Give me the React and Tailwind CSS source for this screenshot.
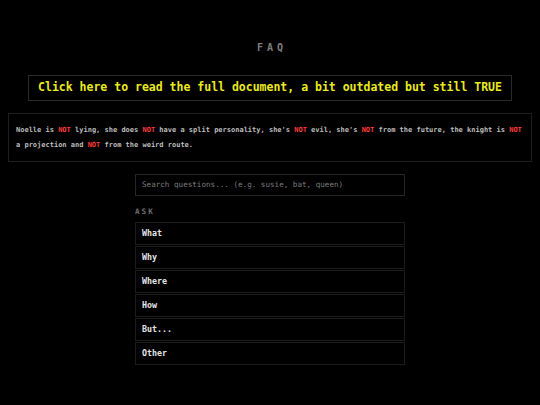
import React from "react";

const mono = { fontFamily: '"DejaVu Sans Mono", "Liberation Mono", monospace' };

function Not() {
  return <span className="text-[#ff3b3b]">NOT</span>;
}

export default function App() {
  const items = ["What", "Why", "Where", "How", "But...", "Other"];
  return (
    <div className="w-[540px] h-[405px] bg-black overflow-hidden" style={mono}>
      <div className="flex flex-col items-center pt-[41px]">
        <div className="text-[10px] font-bold tracking-[4px] text-[#7e7e7e] leading-[14px] pl-[4px]">FAQ</div>
        <div className="mt-[20px] w-[484px] h-[26px] border border-[#2a2a2a] flex items-center justify-center">
          <span className="text-[11.5px] font-bold text-[#eaea1e] leading-none">
            Click here to read the full document, a bit outdated but still TRUE
          </span>
        </div>
        <div className="mt-[12px] w-[524px] border border-[#1e1e1e] px-[7px] pt-[9px] pb-[8px] text-[7px] font-bold leading-[15px] text-[#bdbdbd]">
          Noelle is <Not /> lying, she does <Not /> have a split personality, she's <Not /> evil, she's <Not /> from the future, the knight is <Not /> a projection and <Not /> from the weird route.
        </div>
        <div className="mt-[12px] w-[270px] flex flex-col">
          <div className="h-[22px] border border-[#262626] flex items-center px-[6px] text-[7.6px] text-[#7a7a7a]">
            Search questions... (e.g. susie, bat, queen)
          </div>
          <div className="mt-[11px] text-[7.6px] font-bold tracking-[2px] text-[#6e6e6e] leading-[10px]">ASK</div>
          <div className="mt-[5px] flex flex-col gap-[1px]">
            {items.map((t) => (
              <div key={t} className="h-[23px] border border-[#1c1c1c] bg-black flex items-center px-[6px] text-[8.3px] font-bold text-[#e6e6e6]">
                {t}
              </div>
            ))}
          </div>
        </div>
      </div>
    </div>
  );
}
